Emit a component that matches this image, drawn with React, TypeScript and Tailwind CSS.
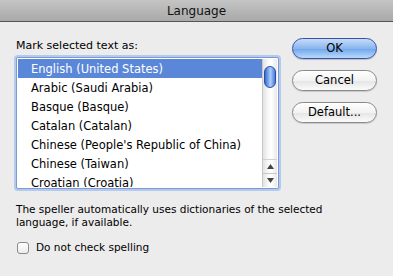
import React from "react";

const langs = [
  "English (United States)",
  "Arabic (Saudi Arabia)",
  "Basque (Basque)",
  "Catalan (Catalan)",
  "Chinese (People's Republic of China)",
  "Chinese (Taiwan)",
  "Croatian (Croatia)",
];

function AquaButton({ label, primary }: { label: string; primary?: boolean }) {
  return (
    <div
      className={
        primary
          ? "h-[21px] w-[85px] rounded-full border border-[#3a50a8] bg-[linear-gradient(#c6dcf8,#8ab6ee_50%,#70a4ea_51%,#b8dafc)] flex items-center justify-center text-[11.5px] text-black shadow-[0_1px_1px_rgba(0,0,0,0.2)]"
          : "h-[21px] w-[85px] rounded-full border border-[#8a8a8a] bg-[linear-gradient(#ffffff,#f2f2f2_50%,#e4e4e4_51%,#fbfbfb)] flex items-center justify-center text-[11.5px] text-black shadow-[0_1px_1px_rgba(0,0,0,0.15)]"
      }
    >
      {label}
    </div>
  );
}

export default function App() {
  return (
    <div
      className="w-[393px] h-[276px] bg-[#ececec] overflow-hidden flex flex-col"
      style={{ fontFamily: '"DejaVu Sans", sans-serif' }}
    >
      <div className="h-[22px] shrink-0 border-b border-[#555] bg-[linear-gradient(#c4c4c4,#a9a9a9)] flex items-center justify-center pt-[1px] text-[12px] text-[#111]">
        Language
      </div>
      <div className="flex pl-[16px] pr-[16px] pt-[16px]">
        <div className="w-[263px] flex flex-col">
          <div className="text-[11px] leading-[15px] text-black">Mark selected text as:</div>
          <div className="mt-[4px] h-[132px] rounded-[2px] border border-[#7a9ad6] shadow-[0_0_0_2px_#b4c9ec] p-[1px] bg-white flex overflow-hidden">
            <div className="flex-1 flex flex-col overflow-hidden">
              {langs.map((l, i) => (
                <div
                  key={l}
                  className={
                    "h-[19px] shrink-0 pl-[13px] pt-[3px] flex items-center text-[11.5px] whitespace-nowrap " +
                    (i === 0 ? "bg-[#5b87d8] text-white" : "text-black")
                  }
                >
                  {l}
                </div>
              ))}
            </div>
            <div className="w-[15px] flex flex-col border-l border-[#c8c8c8] bg-[linear-gradient(90deg,#e2e2e2,#fafafa_40%,#ffffff_60%,#e8e8e8)]">
              <div className="flex-1 pt-[7px] flex justify-center">
                <div className="w-[12px] h-[22px] rounded-full border border-[#2a4fa8] bg-[linear-gradient(90deg,#3a68d0,#8ab4f4_40%,#a8ccfa_55%,#4a7ad8)]" />
              </div>
              <div className="h-[14px] flex items-center justify-center border-t border-[#d0d0d0]">
                <svg width="7" height="5" viewBox="0 0 7 5"><path d="M3.5 0L7 5H0z" fill="#444" /></svg>
              </div>
              <div className="h-[14px] flex items-center justify-center border-t border-[#c8c8c8]">
                <svg width="7" height="5" viewBox="0 0 7 5"><path d="M0 0h7L3.5 5z" fill="#444" /></svg>
              </div>
            </div>
          </div>
        </div>
        <div className="ml-auto flex flex-col gap-[11px]">
          <AquaButton label="OK" primary />
          <AquaButton label="Cancel" />
          <AquaButton label="Default..." />
        </div>
      </div>
      <div className="px-[16px] mt-[14px] text-[10.5px] leading-[13px] text-black w-[345px]">
        The speller automatically uses dictionaries of the selected language, if available.
      </div>
      <div className="px-[17px] mt-[11px] flex items-center gap-[7px] text-[10.5px] text-black">
        <div className="w-[12px] h-[12px] rounded-[3px] border border-[#8a8a8a] bg-[linear-gradient(#ffffff,#ececec)]" />
        Do not check spelling
      </div>
    </div>
  );
}
